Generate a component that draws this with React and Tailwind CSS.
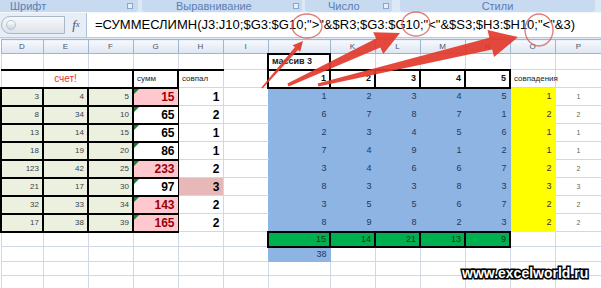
import React from 'react';

const colW = ['w-[42px]', 'w-[45px]', 'w-[45px]', 'w-[45px]', 'w-[45px]', 'w-[45px]', 'w-[62px]', 'w-[45px]', 'w-[45px]', 'w-[45px]', 'w-[45px]', 'w-[45px]', 'w-[47px]'];
const letters = ['D', 'E', 'F', 'G', 'H', 'I', 'J', 'K', 'L', 'M', 'N', 'O', 'P'];

const GRID = 'border border-[#d0d7e5]';
const THICK = 'border-2 border-black';

const left = [[3, 4, 5], [8, 34, 10], [13, 14, 15], [18, 19, 20], [123, 42, 25], [21, 17, 30], [32, 33, 34], [17, 38, 39]];
const sums = [15, 65, 65, 86, 233, 97, 143, 165];
const pinkSum = [true, false, false, false, true, false, true, true];
const match = [1, 2, 1, 1, 2, 3, 2, 2];
const blue = [[1, 2, 3, 4, 5], [6, 7, 8, 7, 1], [2, 3, 4, 5, 6], [7, 4, 9, 1, 2], [3, 4, 6, 6, 7], [8, 3, 3, 8, 3], [3, 5, 5, 6, 7], [8, 9, 8, 2, 3]];
const totals = [15, 14, 21, 13, 9];

const empty = () => ({ v: '', cls: GRID });

function Cell({ v, cls, tri }) {
  return (
    <td className={`relative p-0 px-[3px] whitespace-nowrap leading-none ${cls}`}>
      {tri && <span className="absolute top-0 left-0 w-0 h-0 border-t-[5px] border-r-[5px] border-t-[#1f7a35] border-r-transparent" />}
      {v}
    </td>
  );
}

function buildRows() {
  const rows = [];

  // row 2: "массив 3"
  const r2 = Array.from({ length: 13 }, empty);
  r2[6] = { v: 'массив 3', cls: `${THICK} text-left font-bold text-[9px] text-[#222]` };
  rows.push({ h: 'h-[16px]', cells: r2 });

  // row 3: headers
  const r3 = Array.from({ length: 13 }, empty);
  r3[0] = { v: '', cls: `${GRID} border-t-2 border-t-black` };
  r3[1] = { v: 'счет!', cls: `${GRID} border-t-2 border-t-black text-center text-[10px] text-[#e8322d]` };
  r3[2] = { v: '', cls: `${GRID} border-t-2 border-t-black` };
  r3[3] = { v: 'сумм', cls: `${THICK} text-left text-[8px] text-[#222]` };
  r3[4] = { v: 'совпал', cls: `${GRID} border-t-2 border-t-black text-left text-[8px] text-[#222]` };
  for (let k = 0; k < 5; k++) r3[6 + k] = { v: k + 1, cls: `${THICK} text-right font-bold text-[9px] text-[#111]` };
  r3[11] = { v: 'совпадения', cls: `${GRID} text-left text-[8px] text-[#222] overflow-visible` };
  rows.push({ h: 'h-[18px]', cells: r3 });

  for (let i = 0; i < 8; i++) {
    const r = [];
    left[i].forEach((n) => r.push({ v: n, cls: `${THICK} bg-[#ebf1de] text-right text-[8px] text-[#3a4150]` }));
    r.push({
      v: sums[i],
      tri: true,
      cls: `border-y-2 border-l-2 border-r border-black text-right font-bold text-[12px] ${pinkSum[i] ? 'bg-[#ffc7ce] text-[#9c0006]' : 'bg-white text-black'}`,
    });
    r.push({ v: match[i], cls: `${GRID} text-right font-bold text-[12px] text-black ${i === 5 ? 'bg-[#e6b8b7]' : ''}` });
    r.push({ v: '', cls: `${GRID} border-r-[#8db4e2]` });
    blue[i].forEach((n) => r.push({ v: n, cls: 'border border-[#8db4e2] bg-[#8db4e2] text-right text-[9px] text-[#1f3864]' }));
    r.push({ v: match[i], cls: 'border border-[#ffff00] bg-[#ffff00] text-right text-[9px] text-[#333]' });
    r.push({ v: match[i], cls: `${GRID} text-center text-[7px] text-[#666]` });
    rows.push({ h: 'h-[18px]', cells: r });
  }

  const rg = Array.from({ length: 13 }, empty);
  totals.forEach((n, k) => { rg[6 + k] = { v: n, cls: `${THICK} bg-[#00b050] text-right text-[9px] text-[#153d15]` }; });
  rows.push({ h: 'h-[15px]', cells: rg });

  const r12 = Array.from({ length: 13 }, empty);
  r12[5] = { v: '', cls: `${GRID} border-r-[#8db4e2]` };
  r12[6] = { v: 38, cls: 'border border-[#8db4e2] bg-[#8db4e2] text-right text-[9px] text-[#1f3864]' };
  rows.push({ h: 'h-[15px]', cells: r12 });

  rows.push({ h: 'h-[14px]', cells: Array.from({ length: 13 }, empty) });
  rows.push({ h: 'h-[14px]', cells: Array.from({ length: 13 }, empty) });
  return rows;
}

function Launcher() {
  return <span className="w-[6px] h-[6px] border border-[#8aa6cc] bg-[#e4edf8]" />;
}

function arrow(tx, ty, px, py, w0, w1, hl, hw) {
  const dx = px - tx, dy = py - ty, len = Math.hypot(dx, dy);
  const ux = dx / len, uy = dy / len, nx = -uy, ny = ux;
  const bx = px - ux * hl, by = py - uy * hl;
  const p = (x, y) => `${x.toFixed(1)},${y.toFixed(1)}`;
  return [
    p(tx + nx * w0, ty + ny * w0), p(bx + nx * w1, by + ny * w1), p(bx + nx * hw, by + ny * hw),
    p(px, py),
    p(bx - nx * hw, by - ny * hw), p(bx - nx * w1, by - ny * w1), p(tx - nx * w0, ty - ny * w0),
  ].join(' ');
}

export default function App() {
  const rows = buildRows();
  return (
    <div className="relative w-[601px] h-[288px] overflow-hidden bg-white font-['Liberation_Sans',Arial,sans-serif]">
      {/* ribbon group labels */}
      <div className="flex h-[12px] bg-[#dde8f5] text-[11px] leading-[10px] text-[#5a7db5]">
        <div className="w-[138px] flex items-center justify-between pl-[10px] pr-[5px] bg-[#c8daf0] rounded-br-[3px]">
          <span>Шрифт</span><Launcher />
        </div>
        <div className="w-[4px]" />
        <div className="w-[160px] flex items-center justify-between pl-[34px] pr-[3px] bg-[#c8daf0] rounded-b-[3px]">
          <span>Выравнивание</span><Launcher />
        </div>
        <div className="w-[3px]" />
        <div className="w-[87px] flex items-center justify-between pl-[23px] pr-[3px] bg-[#c8daf0] rounded-b-[3px]">
          <span>Число</span><Launcher />
        </div>
        <div className="w-[8px]" />
        <div className="w-[195px] flex items-center justify-center bg-[#c8daf0] rounded-b-[3px]">
          <span>Стили</span>
        </div>
      </div>

      {/* formula bar */}
      <div className="flex h-[26px] bg-[#e7eef8] border-t border-[#f4f8fc] border-b border-b-[#b9cbe3]">
        <div className="w-[66px] flex items-center pl-[1px]">
          <div className="w-[64px] h-[18px] rounded-l-full bg-gradient-to-b from-[#f7f9fb] to-[#dde3ea] border border-[#a9b7c9] flex items-center pl-[4px]">
            <span className="w-[10px] h-[10px] rounded-full bg-gradient-to-b from-white to-[#cdd5de] border border-[#b8c3d0]" />
          </div>
        </div>
        <div className="w-[20px] flex items-center justify-center font-['Liberation_Serif',serif] italic text-[13px] text-[#555]">
          f<span className="text-[9px]">x</span>
        </div>
        <div className="flex-1 bg-white border-l border-[#aebfd6] flex items-center pl-[8px] text-[13px] text-black whitespace-nowrap">
          =СУММЕСЛИМН(J3:J10;$G3:$G10;"&gt;"&amp;$R3;$G3:$G10;"&lt;"&amp;$S3;$H3:$H10;"&lt;"&amp;3)
        </div>
      </div>
      <div className="h-[1px] bg-[#dfe8f4]" />

      {/* sheet */}
      <table className="table-fixed border-collapse w-[601px]">
        <colgroup>
          {colW.map((w, i) => <col key={i} className={w} />)}
        </colgroup>
        <thead>
          <tr className="h-[14px]">
            {letters.map((l) => (
              <th key={l} className="p-0 border border-[#9eb6ce] bg-gradient-to-b from-[#f7f9fc] to-[#dde6f2] text-[8px] font-normal text-[#4a5566] leading-none">{l}</th>
            ))}
          </tr>
        </thead>
        <tbody>
          {rows.map((r, i) => (
            <tr key={i} className={r.h}>
              {r.cells.map((c, j) => <Cell key={j} {...c} />)}
            </tr>
          ))}
        </tbody>
      </table>

      {/* annotations */}
      <svg className="absolute top-0 left-0 pointer-events-none" width="601" height="288" viewBox="0 0 601 288">
        <g fill="none" stroke="#d9605c" strokeWidth="1.4" opacity="0.8">
          <ellipse cx="307" cy="26" rx="15" ry="12" />
          <ellipse cx="416" cy="24" rx="14" ry="12" />
          <ellipse cx="539" cy="30" rx="14" ry="16" />
        </g>
        <g fill="#e23a2c" opacity="0.92">
          <polygon points={arrow(262, 88, 303, 41, 0.8, 2, 10, 5)} />
          <polygon points={arrow(288, 85, 400, 33, 1.5, 5, 24, 12)} />
          <polygon points={arrow(318, 85, 518, 37, 1.5, 6, 28, 14)} />
        </g>
      </svg>

      {/* watermark */}
      <div className="absolute left-[462px] top-[266px] text-[14px] leading-none font-bold text-white [-webkit-text-stroke:3px_#000] [paint-order:stroke_fill]">
        www.excelworld.ru
      </div>
    </div>
  );
}
